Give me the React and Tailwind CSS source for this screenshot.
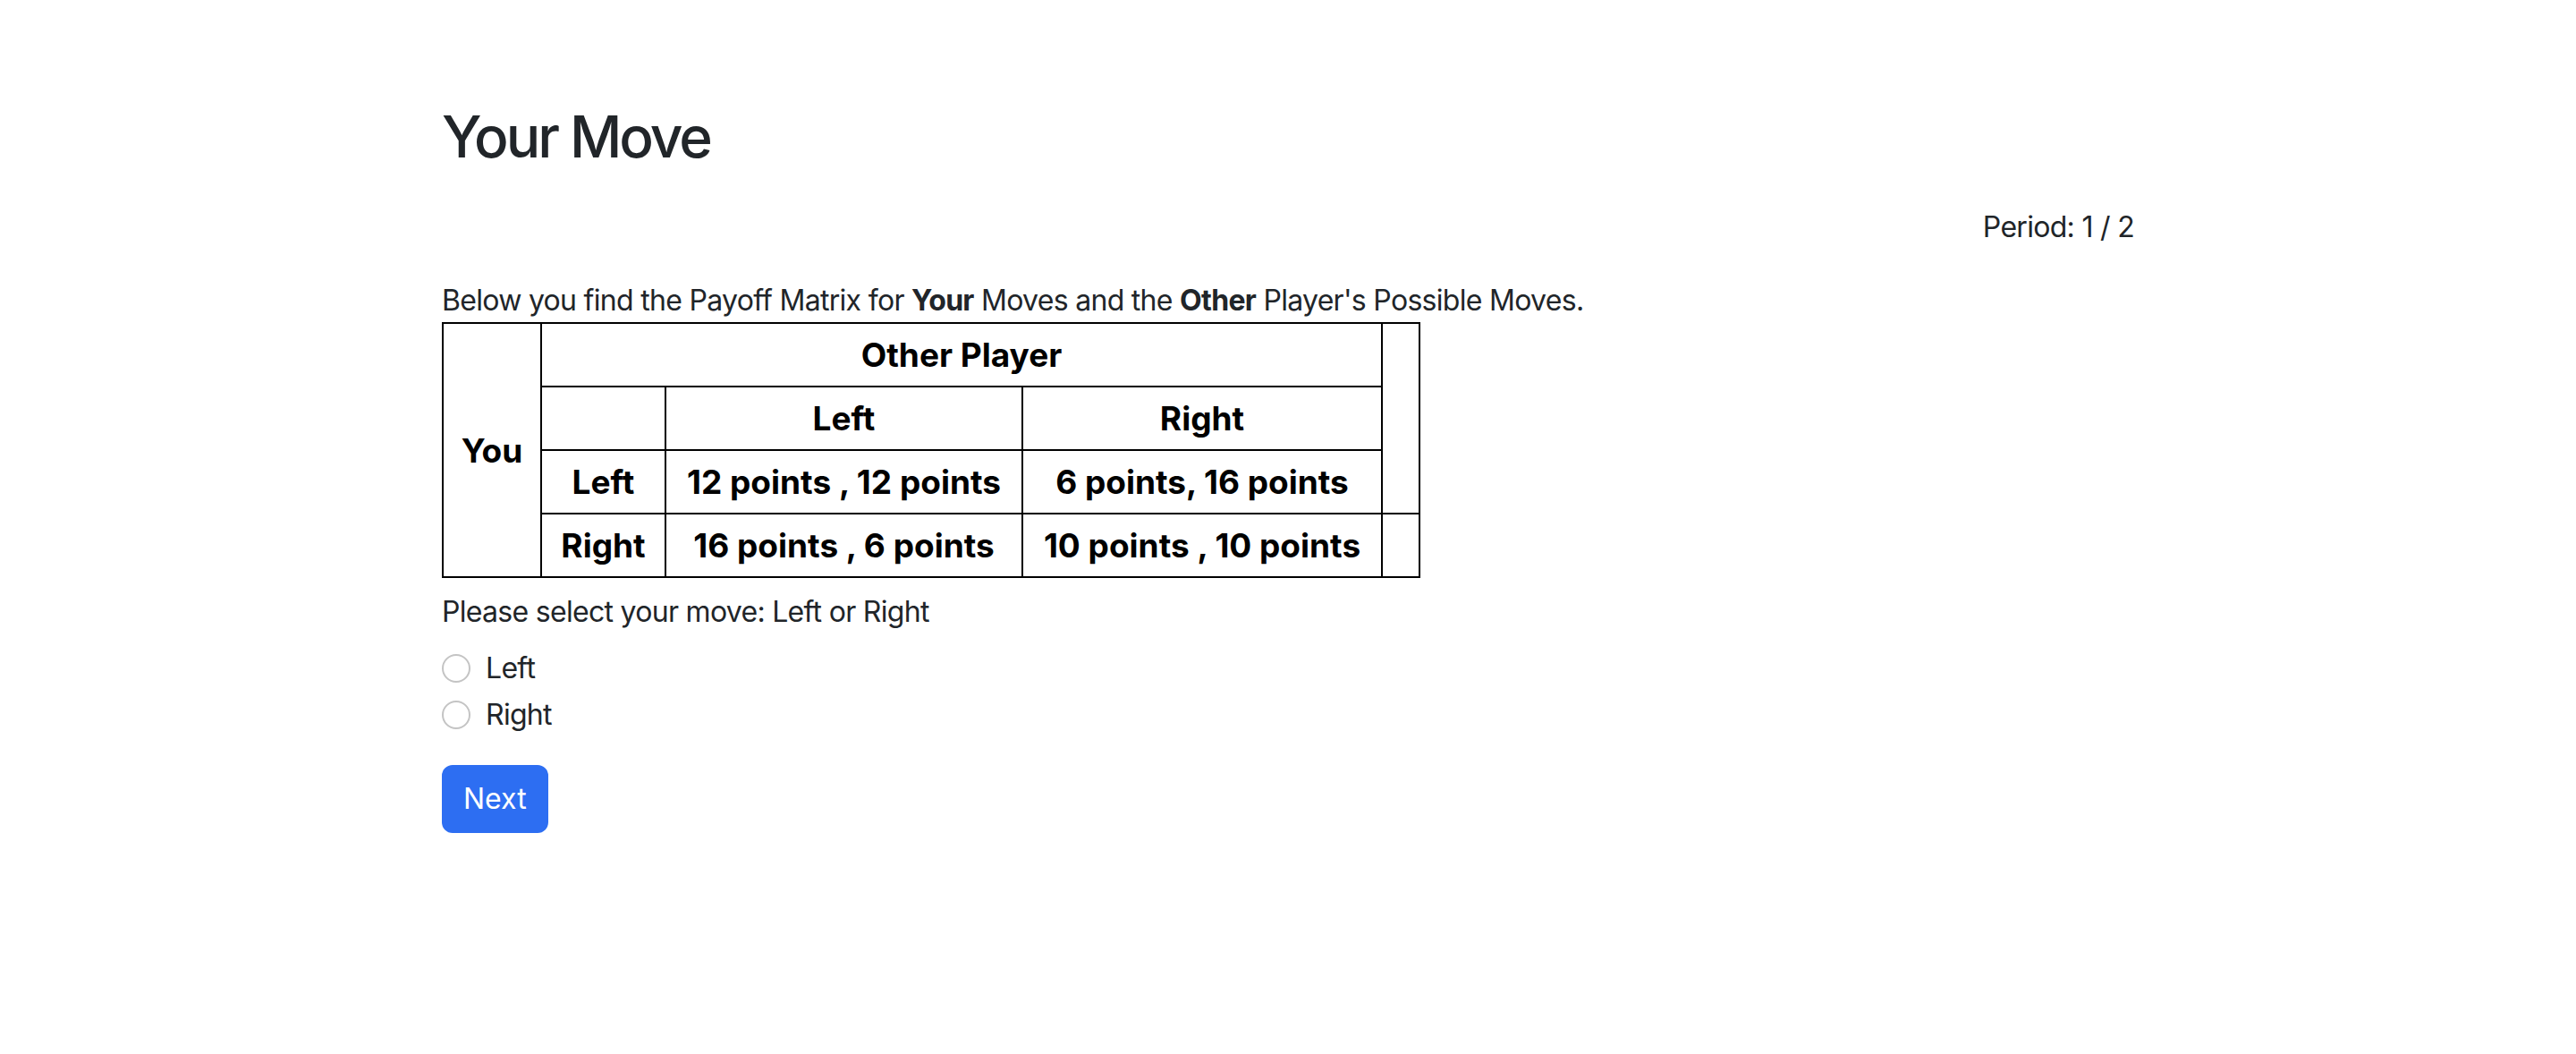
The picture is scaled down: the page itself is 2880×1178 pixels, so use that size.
import React, { useState } from 'react';

// Payoff matrix page for one round of the game
const cellBase = 'border-2 border-black text-center align-middle font-bold text-[37px] leading-[57px] p-0 h-[71px]';

const RadioRow = ({ label, checked, onSelect }) => (
  <label className="flex items-center h-[48px] mb-[4px] cursor-pointer">
    <span
      className={`w-[32px] h-[32px] rounded-full border-2 ${
        checked ? 'border-[#2d6ef2] bg-[#2d6ef2]' : 'border-[#c4c4c4] bg-white'
      } flex items-center justify-center`}
      onClick={onSelect}
    >
      {checked && <span className="w-[12px] h-[12px] rounded-full bg-white" />}
    </span>
    <span className="ml-[17px]" onClick={onSelect}>
      {label}
    </span>
  </label>
);

export default function App() {
  const [move, setMove] = useState(null);

  return (
    <div
      className="min-h-screen bg-white text-[#212529] text-[32px] leading-[48px] tracking-[-0.7px]"
      style={{ fontFamily: 'Inter, "Noto Sans", sans-serif' }}
    >
      <div className="w-[1892px] mx-auto pt-[114px]">
        <h1 className="text-[64px] leading-[77px] font-medium tracking-[-3px] mb-[39px]">Your Move</h1>

        <div className="text-right mb-[34px]">Period: 1 / 2</div>

        <p>
          Below you find the Payoff Matrix for <b>Your</b> Moves and the{' '}
          <b>Other</b> Player's Possible Moves.
        </p>

        <table className="table-fixed border-collapse w-[1092px] text-black tracking-normal">
          <colgroup>
            <col className="w-[110px]" />
            <col className="w-[139px]" />
            <col className="w-[399px]" />
            <col className="w-[402px]" />
            <col className="w-[42px]" />
          </colgroup>
          <tbody>
            <tr>
              <td rowSpan={4} className={cellBase}>You</td>
              <th colSpan={3} className={cellBase}>Other Player</th>
              <td rowSpan={3} className={cellBase}></td>
            </tr>
            <tr>
              <td className={cellBase}></td>
              <th className={cellBase}>Left</th>
              <th className={cellBase}>Right</th>
            </tr>
            <tr>
              <th className={cellBase}>Left</th>
              <td className={cellBase}>12 points , 12 points</td>
              <td className={cellBase}>6 points, 16 points</td>
            </tr>
            <tr>
              <th className={cellBase}>Right</th>
              <td className={cellBase}>16 points , 6 points</td>
              <td className={cellBase}>10 points , 10 points</td>
              <td className={cellBase}></td>
            </tr>
          </tbody>
        </table>

        <div className="mt-[14px] mb-[15px]">Please select your move: Left or Right</div>

        <RadioRow label="Left" checked={move === 'left'} onSelect={() => setMove('left')} />
        <RadioRow label="Right" checked={move === 'right'} onSelect={() => setMove('right')} />

        <button
          type="button"
          className="mt-[28px] h-[76px] px-[24px] rounded-[12px] bg-[#2d6ef2] text-white text-[32px] leading-[48px] tracking-normal"
        >
          Next
        </button>
      </div>
    </div>
  );
}
